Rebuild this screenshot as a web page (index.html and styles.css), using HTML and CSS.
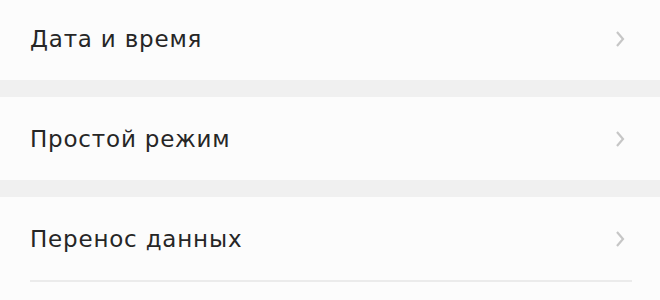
FILE: index.html
```html
<!DOCTYPE html>
<html lang="ru">
<head>
<meta charset="utf-8">
<link rel="stylesheet" href="styles.css">
</head>
<body>
<div class="list">
  <div class="group">
    <div class="row"><span class="label">Дата и время</span><svg class="chev" viewBox="0 0 10 18" width="10" height="18"><path d="M2 2 L8 9 L2 16" fill="none" stroke="#c6c6c6" stroke-width="2.2"/></svg></div>
  </div>
  <div class="group">
    <div class="row"><span class="label">Простой режим</span><svg class="chev" viewBox="0 0 10 18" width="10" height="18"><path d="M2 2 L8 9 L2 16" fill="none" stroke="#c6c6c6" stroke-width="2.2"/></svg></div>
  </div>
  <div class="group">
    <div class="row divided"><span class="label">Перенос данных</span><svg class="chev" viewBox="0 0 10 18" width="10" height="18"><path d="M2 2 L8 9 L2 16" fill="none" stroke="#c6c6c6" stroke-width="2.2"/></svg></div>
    <div class="row"></div>
  </div>
</div>
</body>
</html>
```

FILE: styles.css
```css
html, body {
  margin: 0;
  padding: 0;
  background: #f0f0f0;
  overflow: hidden;
}
.list {
  display: flex;
  flex-direction: column;
  gap: 17px;
  margin-top: -3px;
  font-family: "DejaVu Sans", "Roboto", sans-serif;
}
.group {
  background: #fcfcfc;
  padding: 0 28px 0 30px;
}
.row {
  height: 83px;
  display: flex;
  align-items: center;
  justify-content: space-between;
  box-sizing: border-box;
}
.divided {
  height: 85px;
  border-bottom: 2px solid #ebebeb;
}
.label {
  font-size: 23px;
  color: #262626;
  letter-spacing: 0.8px;
}
.chev {
  margin-right: 7px;
}
```
